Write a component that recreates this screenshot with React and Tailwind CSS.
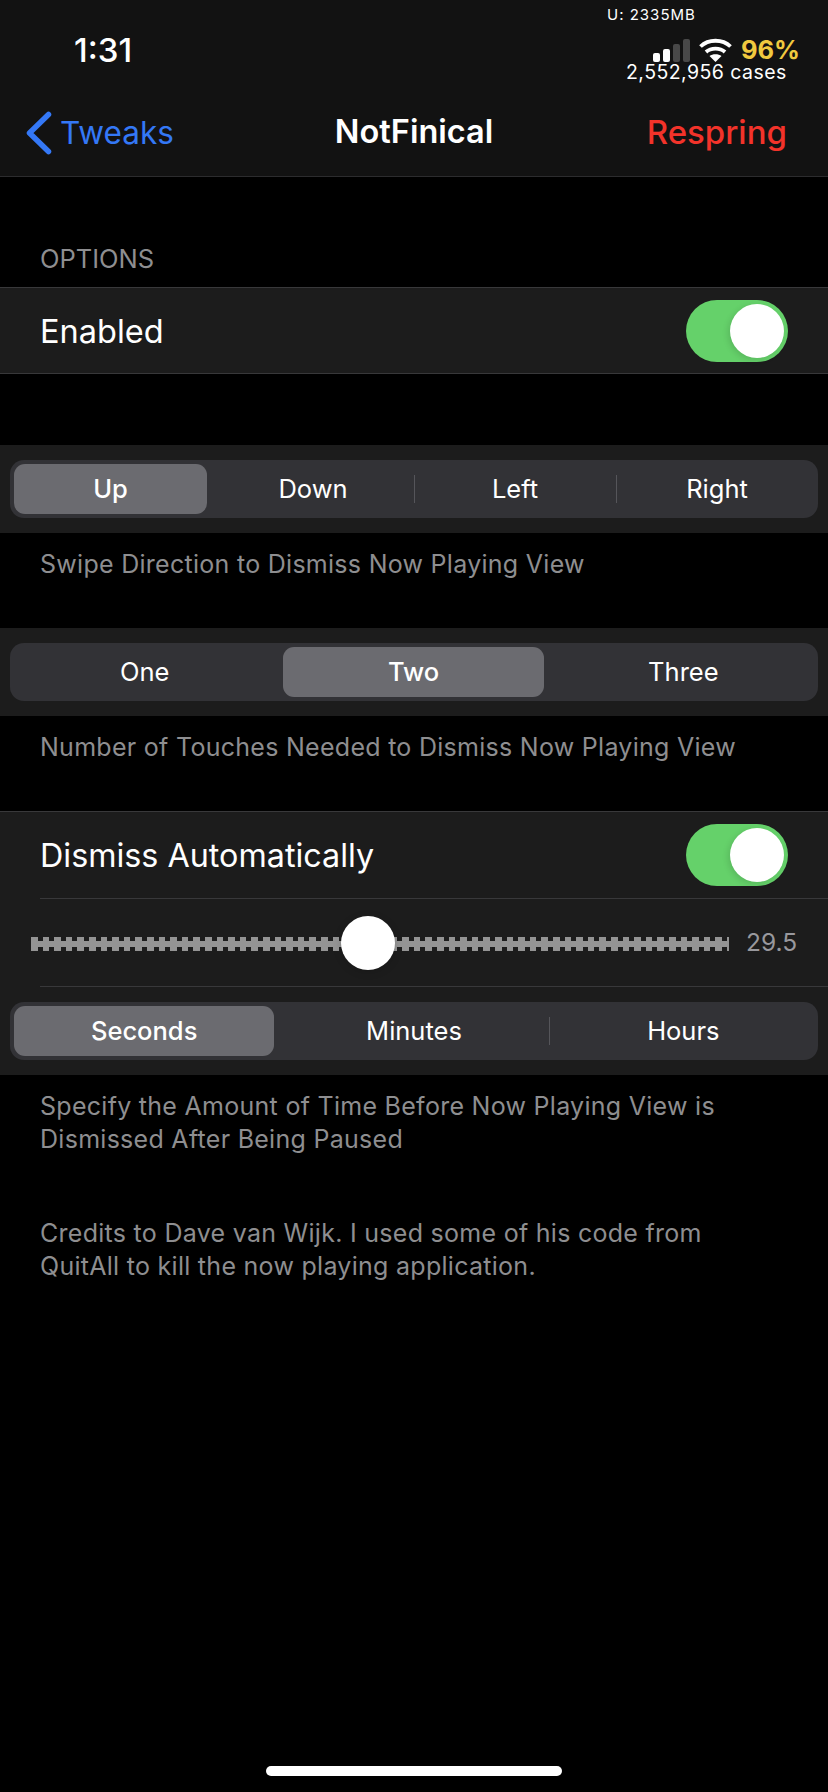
function Toggle() {
  return (
    <div className="relative w-[102px] h-[62px] rounded-full bg-[#65d16a] shrink-0">
      <div className="absolute right-[4px] top-[4px] w-[54px] h-[54px] rounded-full bg-white shadow-[-2px_2px_6px_rgba(0,0,0,0.12)]"></div>
    </div>
  );
}

function Segmented({ items, selected }) {
  return (
    <div className="flex h-[58px] mx-[10px] rounded-[14px] bg-[#323236] py-[4px]">
      {items.map((item, i) => {
        const showDivider = i > 0 && i !== selected && i - 1 !== selected;
        return (
          <div key={item} className="relative flex-1 flex items-center justify-center">
            {showDivider && <div className="absolute left-0 top-[11px] h-[28px] w-px bg-[#55555a]"></div>}
            {i === selected ? (
              <div className="w-full h-full ml-[4px] mr-[5px] rounded-[11px] bg-[#6b6b70] flex items-center justify-center pt-[1px] text-white text-[25.5px] font-medium">
                {item}
              </div>
            ) : (
              <span className="pt-[1px] text-white text-[25.5px]">{item}</span>
            )}
          </div>
        );
      })}
    </div>
  );
}

function SegCell({ items, selected }) {
  return (
    <div className="bg-[#1c1c1c] h-[88px] pt-[15px]">
      <Segmented items={items} selected={selected} />
    </div>
  );
}

function FooterText({ children, className }) {
  return <p className={"px-[40px] text-[25px] tracking-[0.28px] leading-[33px] text-[#8e8e90] " + className}>{children}</p>;
}

function App() {
  return (
    <div className="w-[828px] h-[1792px] bg-black overflow-hidden relative font-['Inter',sans-serif]">
      {/* status + nav */}
      <div className="h-[177px] bg-[#121212] border-b border-[#2c2c2e]">
        <div className="h-[90px] flex justify-between">
          <div className="pl-[74px] pt-[30px] text-white text-[33px] font-medium leading-[40px]">1:31</div>
          <div className="w-[228px] relative">
            <div className="pl-[7px] pt-[6px] text-white text-[15px] leading-[18px] tracking-[1px]">U: 2335MB</div>
            <div className="flex items-end mt-[14px] ml-[53px] h-[24px]">
              <div className="flex items-end gap-[3px]">
                <div className="w-[7px] h-[9px] rounded-[2px] bg-white"></div>
                <div className="w-[7px] h-[13px] rounded-[2px] bg-white"></div>
                <div className="w-[7px] h-[18px] rounded-[2px] bg-[#484848]"></div>
                <div className="w-[7px] h-[23px] rounded-[2px] bg-[#484848]"></div>
              </div>
              <svg width="33" height="24" viewBox="0 0 33 24" className="ml-[9px]" fill="none">
                <path d="M1.5 8.5 C9.5 0.8 23.5 0.8 31.5 8.5" stroke="#fff" strokeWidth="3.8" />
                <path d="M7 14 C12 9.5 21 9.5 26 14" stroke="#fff" strokeWidth="3.8" />
                <path d="M16.5 24 L10.5 18 C13.5 15.6 19.5 15.6 22.5 18 Z" fill="#fff" />
              </svg>
              <span className="ml-[9px] text-[25.5px] leading-[24px] font-bold text-[#f0c93f]">96%</span>
            </div>
            <div className="pl-[26px] text-white text-[19.5px] leading-[20px] tracking-[0.45px] whitespace-nowrap">2,552,956 cases</div>
          </div>
        </div>
        <div className="relative h-[86px] pb-[1px] flex items-center justify-between">
          <div className="flex items-center pl-[25px]">
            <svg width="27" height="44" viewBox="0 0 27 44" fill="none">
              <path d="M23.5 3.5 L4.5 22 L23.5 40.5" stroke="#3478f6" strokeWidth="5.5" strokeLinecap="round" strokeLinejoin="round" />
            </svg>
            <span className="ml-[8px] text-[#3478f6] text-[31.5px]">Tweaks</span>
          </div>
          <div className="absolute left-0 right-0 text-center text-white text-[32.5px] font-semibold">NotFinical</div>
          <span className="pr-[41px] text-[#f3332a] text-[33px] font-medium">Respring</span>
        </div>
      </div>

      {/* options */}
      <div className="pl-[40px] pt-[67px] h-[110px] text-[25.5px] leading-[30px] text-[#8e8e90]">OPTIONS</div>
      <div className="h-[87px] bg-[#1c1c1c] border-y border-[#38383a] flex items-center justify-between px-[40px]">
        <span className="pt-[3px] text-white text-[32.5px]">Enabled</span>
        <Toggle />
      </div>

      <div className="h-[71px]"></div>
      <SegCell items={["Up", "Down", "Left", "Right"]} selected={0} />
      <FooterText className="pt-[15px] h-[95px]">Swipe Direction to Dismiss Now Playing View</FooterText>

      <SegCell items={["One", "Two", "Three"]} selected={1} />
      <FooterText className="pt-[15px] h-[95px]">Number of Touches Needed to Dismiss Now Playing View</FooterText>

      {/* dismiss group */}
      <div className="bg-[#1c1c1c] border-t border-[#38383a]">
        <div className="h-[87px] pb-[1px] flex items-center justify-between px-[40px]">
          <span className="pt-[2px] text-white text-[32.3px]">Dismiss Automatically</span>
          <Toggle />
        </div>
        <div className="ml-[40px] h-[89px] border-y border-[#38383a] flex items-center relative -mt-px">
          <div className="relative mt-[3px] ml-[-9px] w-[698px] h-[14px] bg-[repeating-linear-gradient(90deg,#949494_0,#949494_6.6px,transparent_6.6px,transparent_11.6px)] shrink-0">
            <div className="absolute left-0 right-0 top-[4px] h-[6px] bg-[#949494]"></div>
            <div className="absolute left-[310px] top-[-21px] w-[54px] h-[54px] rounded-full bg-white shadow-[0_2px_8px_rgba(0,0,0,0.15)]"></div>
          </div>
          <span className="ml-[17px] text-[24.5px] text-[#98989d]">29.5</span>
        </div>
        <div className="h-[88px] pt-[15px]">
          <Segmented items={["Seconds", "Minutes", "Hours"]} selected={0} />
        </div>
      </div>

      <FooterText className="pt-[15px] h-[142px]">
        Specify the Amount of Time Before Now Playing View is<br />Dismissed After Being Paused
      </FooterText>
      <FooterText>
        Credits to Dave van Wijk. I used some of his code from<br />QuitAll to kill the now playing application.
      </FooterText>

      <div className="absolute left-[266px] bottom-[16px] w-[296px] h-[10px] rounded-full bg-white"></div>
    </div>
  );
}

export default App;
